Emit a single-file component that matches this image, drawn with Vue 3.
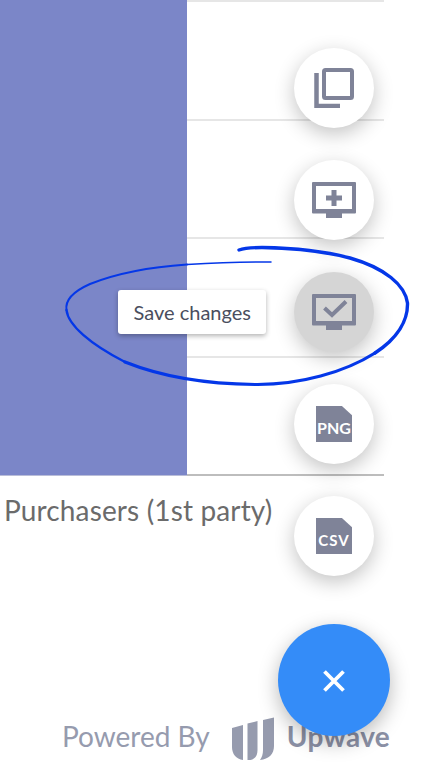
<script setup>
const rows = [1, 2, 3, 4]
</script>

<template>
  <div class="page">
    <div class="chart">
      <div class="bar"></div>
      <div class="grid">
        <div v-for="r in rows" :key="r" class="row"></div>
      </div>
    </div>
    <div class="label">Purchasers (1st party)</div>

    <div class="footer">
      <span class="powered">Powered By</span>
      <svg class="logo" width="44" height="44" viewBox="0 0 44 44">
        <path d="M1 10 L12 7 V42 C5 41 1 36 1 29 Z" fill="#969bae" />
        <path d="M16.500 5.500 L26.500 3 V32 C26.500 37 24.500 41 19.500 42 L16.500 42 Z" fill="#969bae" />
        <path d="M32 2 L43 -0.500 V28 C43 36 38 41 29 42 C31 39 32 36 32 32 Z" fill="#969bae" />
      </svg>
      <span class="brand">Upwave</span>
    </div>

    <div class="fabs">
      <button class="fab">
        <svg width="40" height="40" viewBox="0 0 40 40">
          <path d="M2.500 5 V38 H26" fill="none" stroke="#7f8398" stroke-width="4.500" />
          <rect x="10" y="2" width="28" height="28" rx="1.500" fill="none" stroke="#7f8398" stroke-width="4" />
        </svg>
      </button>
      <button class="fab">
        <svg width="44" height="40" viewBox="0 0 44 40">
          <path d="M1 2 H43 a1 1 0 0 1 1 1 V32.500 a1 1 0 0 1 -1 1 H1 a1 1 0 0 1 -1 -1 V3 a1 1 0 0 1 1 -1 Z M4 6 V29 H40 V6 Z" fill="#7f8398" fill-rule="evenodd" />
          <rect x="14" y="33" width="16" height="5" fill="#7f8398" />
          <path d="M19.500 10 H24.500 V15.500 H30 V20.500 H24.500 V26 H19.500 V20.500 H14 V15.500 H19.500 Z" fill="#7f8398" />
        </svg>
      </button>
      <button class="fab active">
        <svg width="44" height="40" viewBox="0 0 44 40">
          <path d="M1 2 H43 a1 1 0 0 1 1 1 V32.500 a1 1 0 0 1 -1 1 H1 a1 1 0 0 1 -1 -1 V3 a1 1 0 0 1 1 -1 Z M4 6 V29 H40 V6 Z" fill="#7f8398" fill-rule="evenodd" />
          <rect x="14" y="33" width="16" height="5" fill="#7f8398" />
          <path d="M12.500 16 L20 23 L34 9.500" fill="none" stroke="#7f8398" stroke-width="4" />
        </svg>
        <span class="tip">Save changes</span>
      </button>
      <button class="fab">
        <span class="file">PNG</span>
      </button>
      <button class="fab">
        <span class="file csv">CSV</span>
      </button>
    </div>

    <button class="main-fab">
      <svg width="24" height="24" viewBox="0 0 24 24">
        <path d="M2.500 2.500 L21.500 21.500 M21.500 2.500 L2.500 21.500" stroke="#fff" stroke-width="3.800" fill="none" />
      </svg>
    </button>

    <svg class="scribble" width="421" height="782" viewBox="0 0 421 782">
      <g fill="none" stroke="#0437e8" stroke-linecap="round">
        <path d="M271 262 C240 262 215 263 187 264.500" stroke-width="1.500" />
        <path d="M187 264.500 C150 267 115 274 90 284 C72 292 65 300 66.500 310" stroke-width="2" />
        <path d="M66.500 310 C68 325 90 344 125 362" stroke-width="2.400" />
        <path d="M125 362 C160 376 205 384 255 384.500 C300 385 345 372 375 353" stroke-width="3.200" />
        <path d="M375 353 C398 338 408 320 407.500 303 C405 285 385 268 350 258 C320 250 290 248 262 247.500 C250 247.500 243 248.500 239 250" stroke-width="3.400" />
      </g>
    </svg>
  </div>
</template>

<style scoped>
.page {
  position: relative;
  width: 421px;
  height: 782px;
  overflow: hidden;
  background: #fff;
  font-family: Lato, "Liberation Sans", sans-serif;
}
.chart {
  display: flex;
  width: 384px;
  height: 476px;
}
.bar {
  width: 186.670px;
  background: #7b86c8;
  border-bottom: 1px solid #b9bdd8;
  box-sizing: border-box;
}
.grid {
  flex: 1;
  display: flex;
  flex-direction: column;
  border-top: 2px solid #e6e6e6;
  box-sizing: border-box;
}
.row {
  flex: 1;
  border-bottom: 2px solid #e6e6e6;
}
.row:last-child {
  border-bottom-color: #bdbdbd;
}
.label {
  margin: 17px 0 0 4px;
  font-size: 28px;
  letter-spacing: 0.14px;
  line-height: 34px;
  color: #6b6b6b;
}
.footer {
  position: absolute;
  left: 62px;
  top: 714px;
  display: flex;
  align-items: center;
  height: 44px;
}
.powered {
  font-size: 28px;
  color: #969bae;
}
.logo {
  margin: 8px 0 0 21px;
  overflow: visible;
}
.brand {
  margin-left: 12px;
  font-size: 28px;
  font-weight: 700;
  letter-spacing: 0.3px;
  color: #8b90a5;
}
.fabs {
  position: absolute;
  left: 294px;
  top: 48px;
  display: flex;
  flex-direction: column;
  gap: 32px;
}
.fab {
  position: relative;
  display: flex;
  align-items: center;
  justify-content: center;
  width: 80px;
  height: 80px;
  padding: 0;
  border: none;
  border-radius: 50%;
  background: #fff;
  box-shadow: 0 6px 20px rgba(0, 0, 0, 0.24);
}
.fab.active {
  background: #d5d5d5;
}
.tip {
  position: absolute;
  right: 108px;
  top: 18px;
  padding: 0 15px 0 16px;
  height: 44px;
  line-height: 44px;
  border-radius: 3px;
  background: #fff;
  box-shadow: 0 2px 5px rgba(0, 0, 0, 0.3);
  color: #4a4e5e;
  font-family: Lato, "Liberation Sans", sans-serif;
  font-size: 20px;
  white-space: nowrap;
}
.file {
  display: flex;
  align-items: center;
  justify-content: center;
  width: 36px;
  height: 36px;
  background: #7f8398;
  clip-path: polygon(0 0, 72% 0, 100% 26%, 100% 100%, 0 100%);
  color: #fff;
  font-family: Lato, "Liberation Sans", sans-serif;
  font-size: 16px;
  font-weight: 700;
  padding-top: 7px;
  box-sizing: border-box;
}
.csv {
  font-size: 15px;
  letter-spacing: 1px;
}
.main-fab {
  position: absolute;
  left: 278px;
  top: 624px;
  display: flex;
  align-items: center;
  justify-content: center;
  width: 112px;
  height: 112px;
  padding: 2px 0 0;
  border: none;
  border-radius: 50%;
  background: #348cf8;
  box-shadow: 0 6px 20px rgba(0, 0, 0, 0.28);
}
.scribble {
  position: absolute;
  left: 0;
  top: 0;
  pointer-events: none;
}
</style>
